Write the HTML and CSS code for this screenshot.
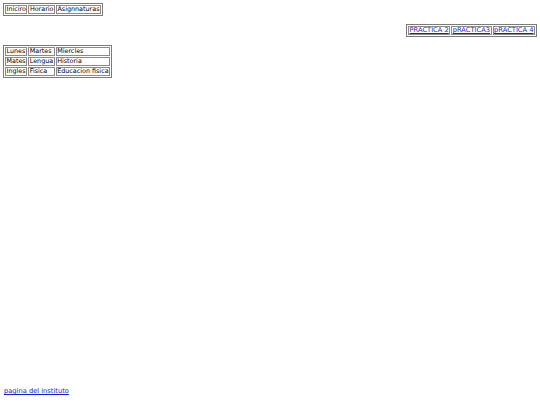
FILE: index.html
```
<!DOCTYPE html>
<html>
<head>
<meta charset="utf-8">
<link rel="stylesheet" href="styles.css">
</head>
<body>
<div class="page">
  <table class="grid menu">
    <tr><td>Iniciro</td><td>Horario</td><td>Asignnaturas</td></tr>
  </table>
  <div class="right">
    <table class="grid">
      <tr><td><a href="#">PRACTICA 2</a></td><td><a href="#">pRACTICA3</a></td><td><a href="#">pRACTICA 4</a></td></tr>
    </table>
  </div>
  <table class="grid timetable">
    <tr><td>Lunes</td><td>Martes</td><td>Miercles</td></tr>
    <tr><td>Mates</td><td>Lengua</td><td>Historia</td></tr>
    <tr><td>Ingles</td><td>Fisica</td><td>Educacion fisica</td></tr>
  </table>
  <div class="footer"><a href="#">pagina del instituto</a></div>
</div>
</body>
</html>
```
FILE: styles.css
```
html, body {
  margin: 0;
  padding: 0;
}
body {
  font-family: "DejaVu Sans", sans-serif;
  font-size: 6.4px;
  line-height: 7px;
  color: #000;
  background: #fff;
}
.page {
  box-sizing: border-box;
  height: 405px;
  padding: 3px 3px 10px 3px;
  display: flex;
  flex-direction: column;
  align-items: flex-start;
}
.grid {
  border: 1px solid #7a7a7a;
  border-spacing: 1px;
  border-collapse: separate;
}
.grid td {
  border: 1px solid #8a8a8a;
  padding: 0 0.5px;
  white-space: nowrap;
}
.right {
  align-self: stretch;
  display: flex;
  justify-content: flex-end;
  margin-top: 8px;
}
.timetable {
  margin-top: 8px;
}
.footer {
  margin-top: auto;
  padding-left: 1px;
}
a {
  font-size: 6.7px;
  color: #1a1ad0;
  text-decoration: underline;
}
```
